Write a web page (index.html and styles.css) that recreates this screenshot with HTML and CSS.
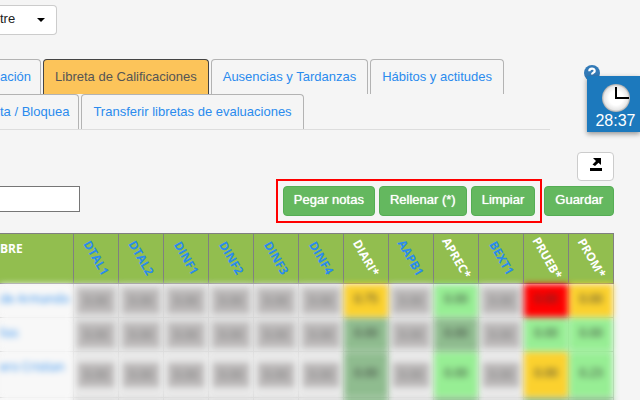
FILE: index.html
```html
<!DOCTYPE html>
<html lang="es">
<head>
    <meta charset="UTF-8">
    <meta name="viewport" content="width=device-width, initial-scale=1.0">
    <title>Libreta de Calificaciones</title>
    <link rel="stylesheet" href="styles.css">
</head>
<body>
    <div class="container">
        <div class="period">
            <select class="period-select" aria-label="Bimestre">
                <option>tre</option>
            </select>
        </div>

        <nav class="tabs">
            <div class="tab-row">
                <a class="tab tab-cut" href="#">ación</a>
                <a class="tab active" href="#">Libreta de Calificaciones</a>
                <a class="tab" href="#">Ausencias y Tardanzas</a>
                <a class="tab" href="#">Hábitos y actitudes</a>
            </div>
            <div class="tab-row">
                <a class="tab tab-cut" href="#">ta / Bloquea</a>
                <a class="tab" href="#">Transferir libretas de evaluaciones</a>
            </div>
        </nav>

        <div class="export-row">
            <button class="btn-export" aria-label="Exportar">
                <svg width="14" height="14" viewBox="0 0 14 14">
                    <path d="M4 0h8v7L9.500 4.800 6 8 3.500 6.500 7 3z"/>
                    <rect x="1" y="10" width="12" height="3"/>
                </svg>
            </button>
        </div>

        <div class="toolbar">
            <input class="search" type="text" aria-label="Buscar">
            <div class="marked">
                <button class="btn">Pegar notas</button>
                <button class="btn">Rellenar (*)</button>
                <button class="btn">Limpiar</button>
            </div>
            <button class="btn">Guardar</button>
        </div>

        <table class="grades">
            <thead>
                <tr>
                    <th class="name">BRE</th>
                    <th><a href="#">DTAL1</a></th>
                    <th><a href="#">DTAL2</a></th>
                    <th><a href="#">DINF1</a></th>
                    <th><a href="#">DINF2</a></th>
                    <th><a href="#">DINF3</a></th>
                    <th><a href="#">DINF4</a></th>
                    <th><span>DIARI*</span></th>
                    <th><a href="#">AAPB1</a></th>
                    <th><span>APREC*</span></th>
                    <th><a href="#">BEXT1</a></th>
                    <th><span>PRUEB*</span></th>
                    <th><span>PROM*</span></th>
                </tr>
            </thead>
            <tbody>
                <tr>
                    <td class="name"><a href="#">de Armando</a></td>
                    <td><input value="0.00" aria-label="DTAL1"></td>
                    <td><input value="0.00" aria-label="DTAL2"></td>
                    <td><input value="0.00" aria-label="DINF1"></td>
                    <td><input value="0.00" aria-label="DINF2"></td>
                    <td><input value="0.00" aria-label="DINF3"></td>
                    <td><input value="0.00" aria-label="DINF4"></td>
                    <td class="yellow">0.75</td>
                    <td><input value="0.00" aria-label="AAPB1"></td>
                    <td class="green">0.00</td>
                    <td><input value="0.00" aria-label="BEXT1"></td>
                    <td class="red">0.00</td>
                    <td class="yellow">0.00</td>
                </tr>
                <tr>
                    <td class="name"><a href="#">lias</a></td>
                    <td><input value="0.00" aria-label="DTAL1"></td>
                    <td><input value="0.00" aria-label="DTAL2"></td>
                    <td><input value="0.00" aria-label="DINF1"></td>
                    <td><input value="0.00" aria-label="DINF2"></td>
                    <td><input value="0.00" aria-label="DINF3"></td>
                    <td><input value="0.00" aria-label="DINF4"></td>
                    <td class="sea">0.00</td>
                    <td><input value="0.00" aria-label="AAPB1"></td>
                    <td class="sea">0.00</td>
                    <td><input value="0.00" aria-label="BEXT1"></td>
                    <td class="green">0.00</td>
                    <td class="green">0.00</td>
                </tr>
                <tr class="tall">
                    <td class="name"><a href="#">ero Cristian</a></td>
                    <td><input value="0.00" aria-label="DTAL1"></td>
                    <td><input value="0.00" aria-label="DTAL2"></td>
                    <td><input value="0.00" aria-label="DINF1"></td>
                    <td><input value="0.00" aria-label="DINF2"></td>
                    <td><input value="0.00" aria-label="DINF3"></td>
                    <td><input value="0.00" aria-label="DINF4"></td>
                    <td class="sea">0.00</td>
                    <td><input value="0.00" aria-label="AAPB1"></td>
                    <td class="green">0.00</td>
                    <td><input value="0.00" aria-label="BEXT1"></td>
                    <td class="yellow">0.00</td>
                    <td class="green">0.23</td>
                </tr>
                <tr class="last">
                    <td class="name"></td>
                    <td></td>
                    <td></td>
                    <td></td>
                    <td></td>
                    <td></td>
                    <td></td>
                    <td class="sea"></td>
                    <td></td>
                    <td class="sea"></td>
                    <td></td>
                    <td class="sea"></td>
                    <td class="sea"></td>
                </tr>
            </tbody>
        </table>
    </div>

    <a class="help" href="#" aria-label="Ayuda">
        <svg width="16" height="16" viewBox="0 0 16 16">
            <circle cx="8" cy="8" r="8" fill="#337ab7"/>
            <path d="M5.300 6.200C5.300 2.700 10.700 2.800 10.700 5.900 10.700 7.700 8 7.600 8 9.600" fill="none" stroke="#fff" stroke-width="2.200"/>
            <rect x="7" y="11" width="2" height="2" fill="#fff"/>
        </svg>
    </a>
    <div class="timer">
        <svg width="28" height="28" viewBox="0 0 28 28">
            <defs>
                <radialGradient id="face">
                    <stop offset="0.500" stop-color="#fff"/>
                    <stop offset="0.850" stop-color="#e8e8e8"/>
                    <stop offset="1" stop-color="#aaa"/>
                </radialGradient>
            </defs>
            <circle cx="14" cy="14" r="14" fill="url(#face)"/>
            <path d="M14 3v11h13" fill="none" stroke="#000" stroke-width="2"/>
        </svg>
        <div>28:37</div>
    </div>
</body>
</html>
```
FILE: styles.css
```css
* {
    box-sizing: border-box;
}

body {
    margin: 0;
    background: #f5f5f5;
    color: #333;
    font-family: "Liberation Sans", Arial, sans-serif;
    font-size: 13px;
    line-height: 18px;
    overflow: hidden;
}

a {
    color: #2a8bee;
    text-decoration: none;
}

button, input, select {
    font: inherit;
}

.container {
    padding: 5px 26px 0 0;
}

.period {
    position: relative;
    width: 57px;
}

.period::after {
    content: "";
    position: absolute;
    right: 12px;
    top: 13px;
    border: 4px solid transparent;
    border-top-color: #000;
    border-bottom: 0;
    pointer-events: none;
}

.period-select {
    display: block;
    width: 100%;
    height: 30px;
    padding: 0 0 2px;
    border: 1px solid #ccc;
    border-left: 0;
    border-radius: 0 4px 4px 0;
    background: #fff;
    color: #222;
    appearance: none;
}

.tabs {
    margin: 24px 64px 22px 0;
    border-bottom: 1px solid #ddd;
}

.tab-row {
    display: flex;
    gap: 2px;
}

.tab {
    height: 35px;
    padding: 8px 11px;
    border: 1px solid #b3b3b3;
    border-bottom: 0;
    border-radius: 4px 4px 0 0;
    white-space: nowrap;
}

.tab-cut {
    padding: 8px 9px 8px 0;
    border-left: 0;
    border-radius: 0 4px 0 0;
}

.tab.active {
    background: #fcc45a;
    border-color: #444;
    color: #555;
}

.export-row {
    display: flex;
    justify-content: flex-end;
}

.btn-export {
    width: 37px;
    height: 29px;
    padding: 0 0 4px;
    border: 1px solid #ccc;
    border-radius: 4px;
    background: #fff;
}

.btn-export svg {
    display: block;
    margin: 0 auto;
}

.toolbar {
    display: flex;
    align-items: flex-start;
    margin: 5px 0 17px;
}

.search {
    width: 80px;
    height: 26px;
    margin-right: auto;
    border: 1px solid #767676;
    border-left: 0;
    background: #fff;
}

.marked {
    display: flex;
    gap: 4px;
    margin-right: 9px;
    outline: 2px solid #f00;
    outline-offset: 5px;
}

.btn {
    height: 30px;
    padding: 0 10px 2px;
    border: 1px solid #55ad55;
    border-radius: 4px;
    background: #64b85f;
    color: #fff;
    text-shadow: 0 0 1px #fff;
    white-space: nowrap;
}

.grades {
    width: 100%;
    table-layout: fixed;
    border-collapse: collapse;
    font-family: "Open Sans", sans-serif;
    font-size: 12px;
}

.grades th {
    width: 45px;
    height: 50px;
    padding: 0 0 2px;
    border: 1px solid #808080;
    background: #92be4f;
    color: #fff;
}

.grades th a,
.grades th span {
    display: inline-block;
    transform: rotate(60deg);
}

.grades .name {
    width: auto;
    padding: 6px 0 0;
    border-left: 0;
    text-align: left;
    vertical-align: top;
    white-space: nowrap;
}

.grades tbody {
    filter: blur(3px);
}

.grades td {
    height: 34px;
    padding: 0 0 4px;
    border: 1px solid #ccc;
    background: #dcdcdc;
    text-align: center;
}

.grades .tall td {
    height: 46px;
    background: #e8e8e8;
}

.grades .last td {
    height: 12px;
    padding: 0;
}

.grades input {
    display: block;
    width: 36px;
    height: 24px;
    margin: 4px auto 0;
    padding: 0;
    border: 0;
    background: #bbb8b8;
    color: #777;
    text-align: center;
}

.grades tr td.name {
    background: #f8f8f8;
}

.grades tr td.yellow {
    background: #fbd12e;
}

.grades tr td.green {
    background: #97ee94;
}

.grades tr td.sea {
    background: #8fbc8f;
}

.grades tr td.red {
    background: #f00;
}

.help {
    position: absolute;
    top: 65px;
    right: 40px;
    height: 16px;
}

.help svg {
    display: block;
}

.timer {
    position: absolute;
    top: 76px;
    right: 0;
    width: 53px;
    height: 56px;
    padding: 8px 0 0 4px;
    background: #1c79bd;
    box-shadow: 0 2px 5px rgba(0, 0, 0, 0.4);
    color: #fff;
    font-size: 16px;
    text-align: center;
}

.timer svg {
    display: block;
    margin: 0 auto;
}
```
